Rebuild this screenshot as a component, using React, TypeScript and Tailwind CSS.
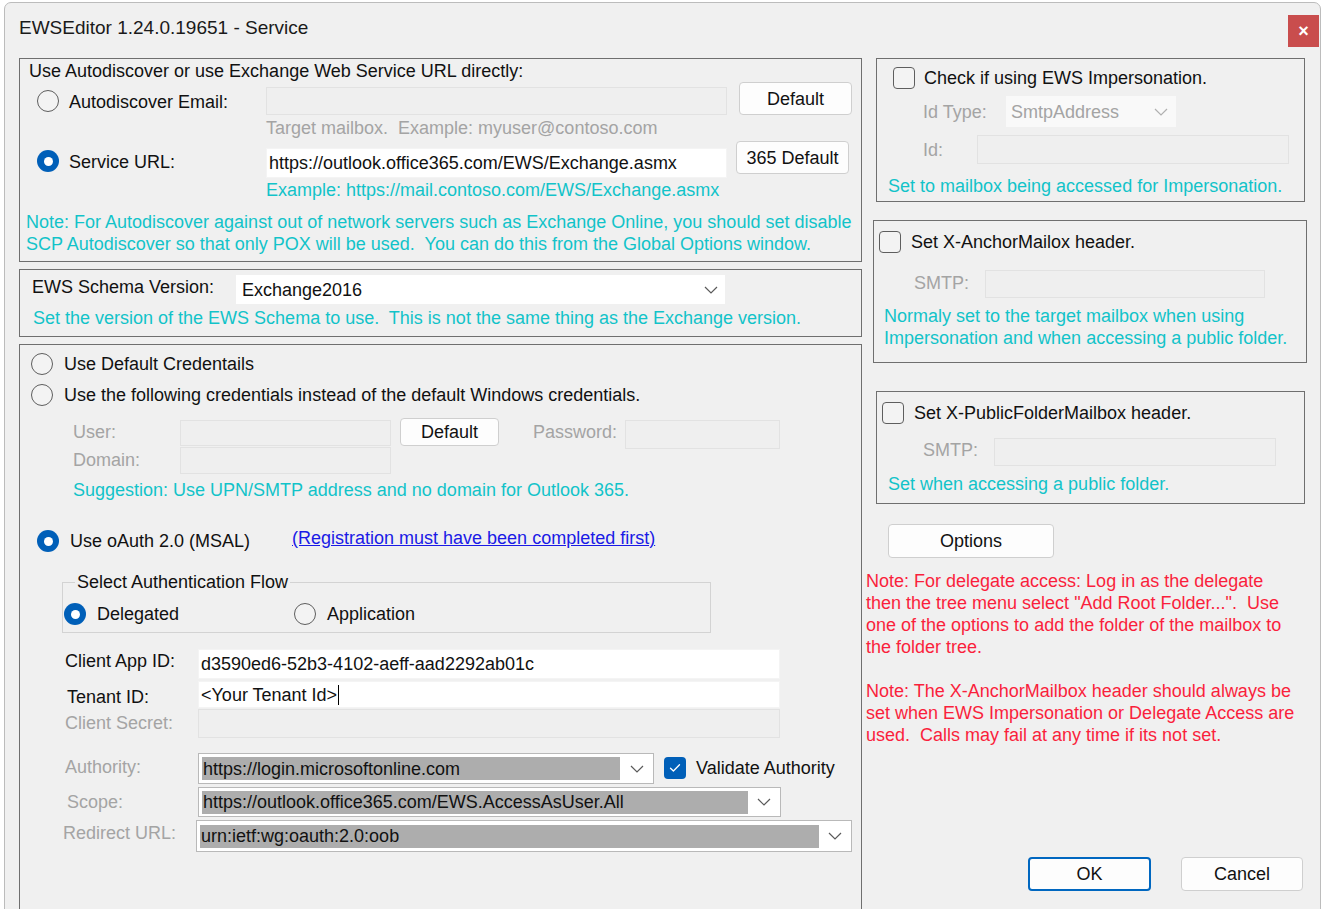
import type { ReactNode } from 'react'

// Win11-ish form controls, sized to the dialog
function Radio({ checked = false }: { checked?: boolean }) {
  if (checked) {
    return (
      <span className="flex h-[22px] w-[22px] shrink-0 items-center justify-center rounded-full bg-[#005fb8]">
        <span className="h-[9px] w-[9px] rounded-full bg-white" />
      </span>
    )
  }
  return <span className="block h-[22px] w-[22px] shrink-0 rounded-full border border-[#5e5e5e] bg-[#f3f3f3]" />
}

function Check({ checked = false }: { checked?: boolean }) {
  if (checked) {
    return (
      <span className="flex h-[22px] w-[22px] shrink-0 items-center justify-center rounded-[4px] bg-[#005fb8]">
        <svg width="12" height="10" viewBox="0 0 12 10" fill="none">
          <path d="M1.5 5.2 4.4 8 10.5 1.8" stroke="white" strokeWidth="1.3" strokeLinecap="round" strokeLinejoin="round" />
        </svg>
      </span>
    )
  }
  return <span className="block h-[22px] w-[22px] shrink-0 rounded-[4px] border border-[#5e5e5e] bg-[#f3f3f3]" />
}

function Chevron({ color = '#5a5a5a' }: { color?: string }) {
  return (
    <svg width="14" height="8" viewBox="0 0 14 8" fill="none">
      <path d="M1 1l6 6 6-6" stroke={color} strokeWidth="1.2" />
    </svg>
  )
}

function Btn({ className = '', primary = false, children }: { className?: string; primary?: boolean; children: ReactNode }) {
  return (
    <div
      className={`flex shrink-0 items-center justify-center rounded-[4px] bg-[#fdfdfd] text-[#111] ${
        primary ? 'border-2 border-[#0067c0]' : 'border border-[#cfcfcf]'
      } ${className}`}
    >
      {children}
    </div>
  )
}

function Box({ className = '', off = false, children }: { className?: string; off?: boolean; children?: ReactNode }) {
  return (
    <div
      className={`flex shrink-0 items-center overflow-hidden whitespace-nowrap pl-[2px] text-[#111] ${
        off ? 'border border-[#e2e2e2] bg-[#efefef]' : 'border border-[#f4f4f4] bg-white'
      } ${className}`}
    >
      {children}
    </div>
  )
}

// dropdown with the grey "selected text" highlight
function SelCombo({ className = '', fill, children }: { className?: string; fill: string; children: ReactNode }) {
  return (
    <div className={`flex shrink-0 items-center border border-[#b9b9b9] bg-white pl-[3px] ${className}`}>
      <div className={`flex h-[23px] items-center whitespace-nowrap bg-[#adadad] pl-[1px] text-[#111] ${fill}`}>{children}</div>
      <div className="flex flex-1 justify-center">
        <Chevron />
      </div>
    </div>
  )
}

function Group({ className = '', children }: { className?: string; children: ReactNode }) {
  return <div className={`shrink-0 border border-[#6f6f6f] ${className}`}>{children}</div>
}

const CYAN = 'text-[#12c3c9]'
const GREY = 'text-[#a4a4a4]'

export default function App() {
  return (
    <div className="h-[909px] w-[1323px] overflow-hidden bg-white pl-[4px] pt-[2px] font-['Liberation_Sans',Arial,sans-serif] text-[18px] leading-[22px] text-[#111]">
      <div className="h-[930px] w-[1317px] rounded-t-[7px] border border-[#bcbcbc] bg-[#f0f0f0]">
        {/* title bar */}
        <div className="flex h-[55px] items-start justify-between">
          <div className="ml-[14px] mt-[14px] text-[19px] text-[#1a1a1a]">EWSEditor 1.24.0.19651 - Service</div>
          <div className="mr-[1px] mt-[12px] flex h-[32px] w-[31px] items-center justify-center bg-[#c94d4d] text-[18px] font-bold text-white">
            ×
          </div>
        </div>

        <div className="flex gap-[4px] pl-[14px]">
          {/* ── left column ── */}
          <div className="flex w-[843px] shrink-0 flex-col gap-[7px]">
            <Group className="h-[204px]">
              <div className="ml-[9px] mt-[1px]">Use Autodiscover or use Exchange Web Service URL directly:</div>
              <div className="ml-[17px] flex items-start">
                <span className="mt-[8px]"><Radio /></span>
                <span className="ml-[10px] mt-[9px] w-[197px] shrink-0">Autodiscover Email:</span>
                <Box off className="mt-[5px] h-[28px] w-[461px]" />
                <Btn className="ml-[12px] h-[33px] w-[113px]">Default</Btn>
              </div>
              <div className={`ml-[246px] mt-[2px] ${GREY}`}>Target mailbox.&nbsp; Example: myuser@contoso.com</div>
              <div className="ml-[17px] mt-[2px] flex items-start">
                <span className="mt-[9px]"><Radio checked /></span>
                <span className="ml-[10px] mt-[10px] w-[197px] shrink-0">Service URL:</span>
                <Box className="mt-[7px] h-[30px] w-[461px]">https://outlook.office365.com/EWS/Exchange.asmx</Box>
                <Btn className="ml-[9px] h-[33px] w-[113px]">365 Default</Btn>
              </div>
              <div className={`ml-[246px] mt-[1px] ${CYAN}`}>Example: https://mail.contoso.com/EWS/Exchange.asmx</div>
              <div className={`ml-[6px] mt-[10px] whitespace-pre ${CYAN}`}>
                {'Note: For Autodiscover against out of network servers such as Exchange Online, you should set disable\nSCP Autodiscover so that only POX will be used.  You can do this from the Global Options window.'}
              </div>
            </Group>

            <Group className="h-[68px]">
              <div className="ml-[12px] mt-[5px] flex items-start">
                <span className="mt-[1px] w-[204px] shrink-0">EWS Schema Version:</span>
                <div className="flex h-[29px] w-[489px] items-center justify-between bg-white pl-[6px] pr-[7px]">
                  <span>Exchange2016</span>
                  <Chevron />
                </div>
              </div>
              <div className={`ml-[13px] mt-[3px] whitespace-pre ${CYAN}`}>
                {'Set the version of the EWS Schema to use.  This is not the same thing as the Exchange version.'}
              </div>
            </Group>

            <Group className="h-[600px]">
              <div className="ml-[11px] mt-[8px] flex items-center">
                <Radio />
                <span className="ml-[11px]">Use Default Credentails</span>
              </div>
              <div className="ml-[11px] mt-[9px] flex items-center">
                <Radio />
                <span className="ml-[11px]">Use the following credentials instead of the default Windows credentials.</span>
              </div>

              <div className="ml-[53px] mt-[12px] flex items-start">
                <span className={`mt-[3px] w-[107px] shrink-0 ${GREY}`}>User:</span>
                <Box off className="mt-[2px] h-[26px] w-[211px]" />
                <Btn className="ml-[9px] h-[28px] w-[99px]">Default</Btn>
                <span className={`ml-[34px] mt-[3px] w-[92px] shrink-0 ${GREY}`}>Password:</span>
                <Box off className="mt-[2px] h-[29px] w-[155px]" />
              </div>
              <div className="-mt-[2px] ml-[53px] flex items-start">
                <span className={`mt-[2px] w-[107px] shrink-0 ${GREY}`}>Domain:</span>
                <Box off className="h-[27px] w-[211px]" />
              </div>
              <div className={`ml-[53px] mt-[5px] ${CYAN}`}>Suggestion: Use UPN/SMTP address and no domain for Outlook 365.</div>

              <div className="ml-[17px] mt-[26px] flex items-start">
                <span className="mt-[3px]"><Radio checked /></span>
                <span className="ml-[11px] mt-[3px] w-[222px] shrink-0">Use oAuth 2.0 (MSAL)</span>
                <span className="text-[#1a1ae6] underline underline-offset-1">(Registration must have been completed first)</span>
              </div>

              <fieldset className="ml-[42px] mt-[19px] w-[649px] border border-[#d3d3d3] pb-[7px]">
                <legend className="ml-[12px] px-[2px]">Select Authentication Flow</legend>
                <div className="ml-[1px] mt-[10px] flex items-center">
                  <Radio checked />
                  <span className="ml-[11px] w-[197px] shrink-0">Delegated</span>
                  <Radio />
                  <span className="ml-[11px]">Application</span>
                </div>
              </fieldset>

              <div className="ml-[45px] mt-[16px] flex items-start">
                <span className="mt-[1px] w-[133px] shrink-0">Client App ID:</span>
                <Box className="h-[30px] w-[582px]">d3590ed6-52b3-4102-aeff-aad2292ab01c</Box>
              </div>
              <div className="ml-[45px] mt-[2px] flex items-start">
                <span className="ml-[2px] mt-[5px] w-[131px] shrink-0">Tenant ID:</span>
                <Box className="h-[27px] w-[582px]">
                  &lt;Your Tenant Id&gt;<span className="ml-[1px] inline-block h-[20px] w-[1px] bg-black" />
                </Box>
              </div>
              <div className="ml-[45px] mt-[1px] flex items-start">
                <span className={`mt-[3px] w-[133px] shrink-0 ${GREY}`}>Client Secret:</span>
                <Box off className="h-[29px] w-[582px]" />
              </div>

              <div className="ml-[45px] mt-[15px] flex items-start">
                <span className={`mt-[3px] w-[133px] shrink-0 ${GREY}`}>Authority:</span>
                <SelCombo className="h-[31px] w-[456px]" fill="w-[418px]">https://login.microsoftonline.com</SelCombo>
                <span className="ml-[10px] mt-[4px]"><Check checked /></span>
                <span className="ml-[10px] mt-[4px]">Validate Authority</span>
              </div>
              <div className="ml-[45px] mt-[3px] flex items-start">
                <span className={`ml-[2px] mt-[4px] w-[131px] shrink-0 ${GREY}`}>Scope:</span>
                <SelCombo className="h-[30px] w-[583px]" fill="w-[546px]">https://outlook.office365.com/EWS.AccessAsUser.All</SelCombo>
              </div>
              <div className="ml-[43px] mt-[3px] flex items-start">
                <span className={`mt-[2px] w-[133px] shrink-0 ${GREY}`}>Redirect URL:</span>
                <SelCombo className="h-[32px] w-[656px]" fill="w-[619px]">urn:ietf:wg:oauth:2.0:oob</SelCombo>
              </div>
            </Group>
          </div>

          {/* ── right column ── */}
          <div className="flex w-[445px] shrink-0 flex-col">
            <Group className="ml-[10px] h-[144px] w-[429px]">
              <div className="ml-[16px] mt-[8px] flex items-center">
                <Check />
                <span className="ml-[9px]">Check if using EWS Impersonation.</span>
              </div>
              <div className="ml-[46px] mt-[7px] flex items-start">
                <span className={`mt-[5px] w-[83px] shrink-0 ${GREY}`}>Id Type:</span>
                <div className={`flex h-[31px] w-[170px] items-center justify-between bg-[#f9f9f9] pl-[5px] pr-[8px] ${GREY}`}>
                  <span>SmtpAddress</span>
                  <Chevron color="#b0b0b0" />
                </div>
              </div>
              <div className="ml-[46px] mt-[8px] flex items-start">
                <span className={`mt-[4px] w-[54px] shrink-0 ${GREY}`}>Id:</span>
                <Box off className="h-[29px] w-[312px]" />
              </div>
              <div className={`ml-[11px] mt-[11px] ${CYAN}`}>Set to mailbox being accessed for Impersonation.</div>
            </Group>

            <Group className="ml-[7px] mt-[18px] h-[143px] w-[434px]">
              <div className="ml-[5px] mt-[10px] flex items-center">
                <Check />
                <span className="ml-[10px]">Set X-AnchorMailox header.</span>
              </div>
              <div className="ml-[40px] mt-[17px] flex items-start">
                <span className={`mt-[2px] w-[71px] shrink-0 ${GREY}`}>SMTP:</span>
                <Box off className="h-[28px] w-[280px]" />
              </div>
              <div className={`ml-[10px] mt-[7px] ${CYAN}`}>
                Normaly set to the target mailbox when using
                <br />
                Impersonation and when accessing a public folder.
              </div>
            </Group>

            <Group className="ml-[10px] mt-[28px] h-[113px] w-[429px]">
              <div className="ml-[5px] mt-[10px] flex items-center">
                <Check />
                <span className="ml-[10px]">Set X-PublicFolderMailbox header.</span>
              </div>
              <div className="ml-[46px] mt-[14px] flex items-start">
                <span className={`mt-[1px] w-[71px] shrink-0 ${GREY}`}>SMTP:</span>
                <Box off className="h-[28px] w-[282px]" />
              </div>
              <div className={`ml-[11px] mt-[7px] ${CYAN}`}>Set when accessing a public folder.</div>
            </Group>

            <Btn className="ml-[22px] mt-[20px] h-[34px] w-[166px]">Options</Btn>

            <div className="mt-[12px] whitespace-pre text-[#fa1f3c]">
              {'Note: For delegate access: Log in as the delegate\nthen the tree menu select "Add Root Folder...".  Use\none of the options to add the folder of the mailbox to\nthe folder tree.\n\nNote: The X-AnchorMailbox header should always be\nset when EWS Impersonation or Delegate Access are\nused.  Calls may fail at any time if its not set.'}
            </div>

            <div className="ml-[162px] mt-[111px] flex gap-[30px]">
              <Btn primary className="h-[34px] w-[123px]">OK</Btn>
              <Btn className="h-[34px] w-[122px]">Cancel</Btn>
            </div>
          </div>
        </div>
      </div>
    </div>
  )
}
